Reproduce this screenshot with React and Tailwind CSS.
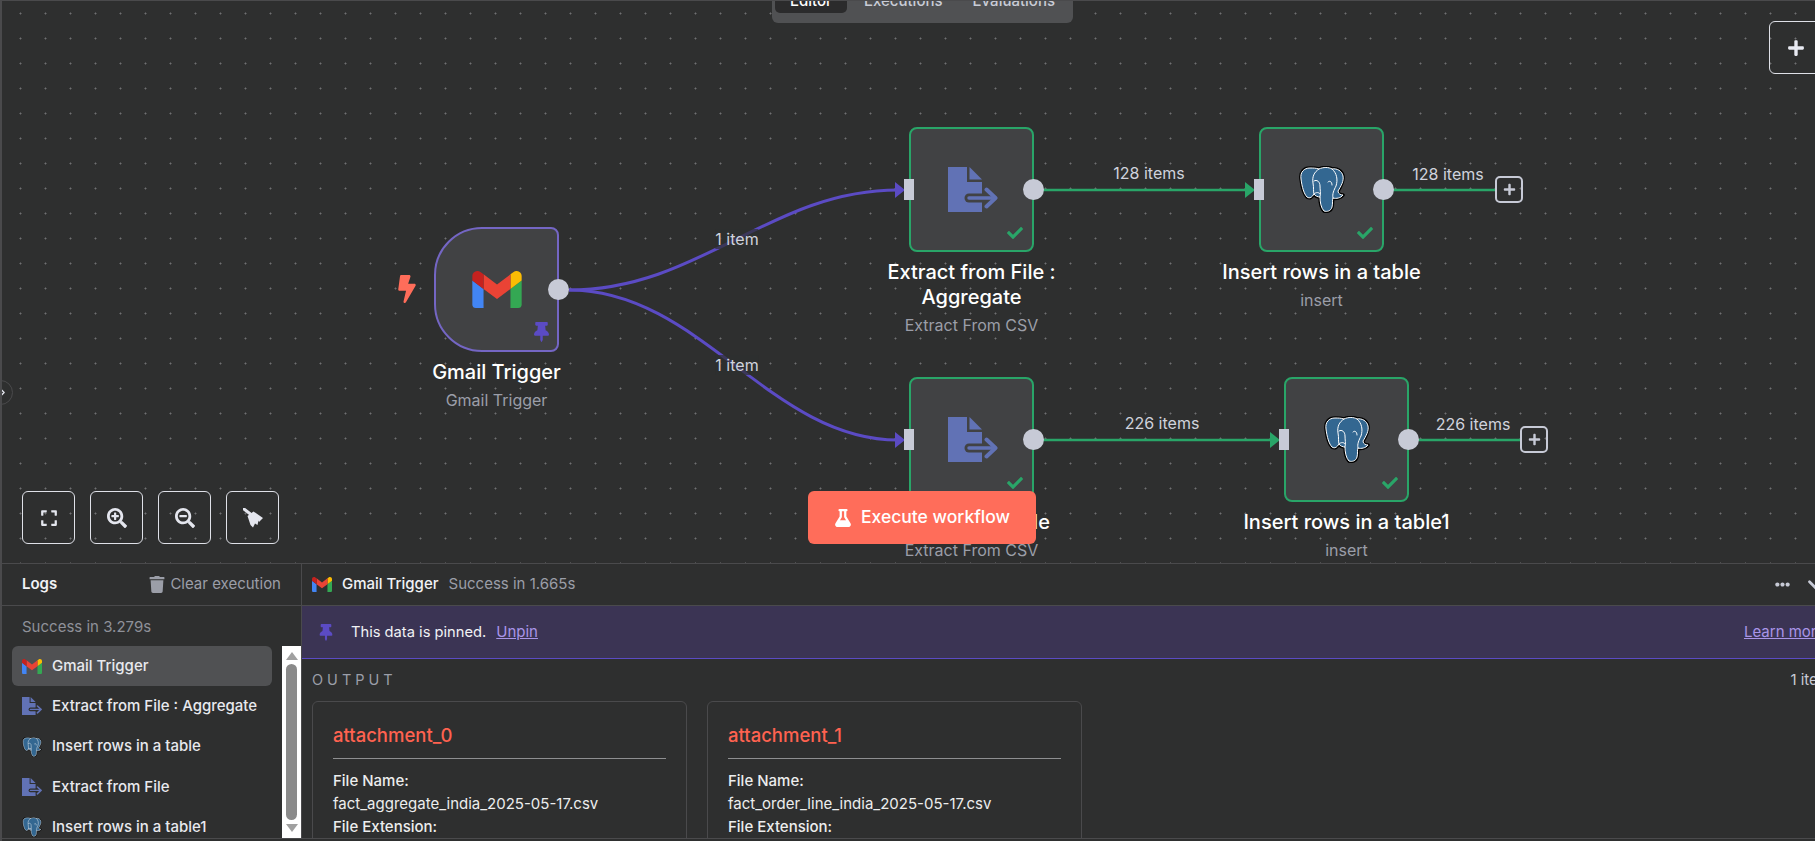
import React from 'react';
import { FaBolt, FaCheck, FaExpand, FaFlask, FaEllipsisH, FaPlus, FaSearchMinus, FaSearchPlus, FaThumbtack, FaTrash } from 'react-icons/fa';
import { ChevronDown, ChevronRight } from 'lucide-react';

const GmailIcon = ({ className }) => (
    <svg viewBox="52 42 88 66" className={className}>
        <path fill="#4285f4" d="M58 108h14V74L52 59v43c0 3.32 2.69 6 6 6" />
        <path fill="#34a853" d="M120 108h14c3.32 0 6-2.69 6-6V59l-20 15" />
        <path fill="#fbbc04" d="M120 48v26l20-15v-8c0-7.42-8.47-11.65-14.4-7.2" />
        <path fill="#ea4335" d="M72 74V48l24 18 24-18v26L96 92" />
        <path fill="#c5221f" d="M52 51v8l20 15V48l-5.6-4.2c-5.94-4.45-14.4-.22-14.4 7.2" />
    </svg>
);

const elephant = 'M11 2C5 2 1 6 2 13C3 21 5 28 8 31C11 33 13 31 15 28C16 30 19 31 21 31C21 36 22 42 25 45C28 46 32 45 33 41C34 37 33 34 34 32C37 33 42 32 44 29C42 29 39 28 39 25C42 20 45 15 44 10C43 5 38 2 33 3C30 1 24 1 20 3C17 2 14 2 11 2Z';

const PostgresIcon = ({ className }) => (
    <svg viewBox="0 0 46 47" className={className}>
        <path d={elephant} fill="#000" stroke="#000" strokeWidth="3.5" strokeLinejoin="round" />
        <path d={elephant} fill="#336791" stroke="#fff" strokeWidth="1" strokeLinejoin="round" />
        <g fill="none" stroke="#fff" strokeWidth="1" strokeLinecap="round">
            <path d="M20 3C15 6 13 11 14 17C15 22 14 25 15 28" />
            <path d="M33 3C38 7 39 14 37 20C35 24 33 28 34 32" />
            <path d="M15 15C18 13 21 16 21 20C21 24 22 27 21 31" />
            <path d="M29 16C31 14 33 16 33 19" />
            <path d="M15 28C17 26 20 26 21 28" />
        </g>
    </svg>
);

// document with an arrow leaving it, hole is the colour behind the icon
const ExtractIcon = ({ className, hole }) => (
    <svg viewBox="0 0 50 45" className={className} fill="none">
        <path d="M0 0H19V15H34V45H0Z" fill="#6172b5" />
        <path d="M21.5 0L34 12.5H21.5Z" fill="#6172b5" />
        <path d="M21 31H34" stroke={hole} strokeWidth="9" strokeLinecap="round" />
        <path d="M34 26.5H38V35.5H34Z" fill={hole} />
        <path d="M21 31H47" stroke="#6172b5" strokeWidth="3.5" strokeLinecap="round" />
        <path d="M38.5 22.5L47.5 31L38.5 39.5" stroke="#6172b5" strokeWidth="4" strokeLinecap="round" strokeLinejoin="round" />
    </svg>
);

const BroomIcon = ({ className }) => (
    <svg viewBox="0 0 20 20" className={className} fill="currentColor">
        <path d="M1 1L8 6.5" stroke="currentColor" strokeWidth="3" strokeLinecap="round" />
        <path d="M4.5 8L10.5 3.5L20 10L16 14L15.5 12.5L14.5 17L12 15.5L10 19.5L7.5 17Z" />
    </svg>
);

const NodeCard = ({ className, title, subtitle, icon, trigger }) => (
    <div className={`absolute flex w-[241px] flex-col items-center ${className}`}>
        <div className={`relative flex h-[125px] w-[125px] items-center justify-center border-2 bg-[#414244] ${trigger ? 'rounded-l-[48px] rounded-r-[8px] border-[#7466c4]' : 'rounded-[8px] border-[#29a568]'}`}>
            {icon}
            {!trigger && <span className="absolute -left-[7px] top-[50px] h-[21px] w-[10px] bg-[#c7cad6]"></span>}
            <span className="absolute -right-[12px] top-[50px] h-[21px] w-[21px] rounded-full bg-[#c7cad6]"></span>
            {trigger
                ? <FaThumbtack className="absolute bottom-[8px] right-[8px] h-[20px] w-[15px] text-[#5b4bc4]" />
                : <FaCheck className="absolute bottom-[9px] right-[7px] h-[16px] w-[20px] text-[#29a568]" />}
        </div>
        <div className="mt-[7.5px] w-[230px] text-center text-[20px] font-medium leading-[25px] text-white">{title}</div>
        <div className="mt-[5px] text-[16px] leading-[20px] text-[#9b9ea8]">{subtitle}</div>
    </div>
);

const EdgeLabel = ({ className, children }) => (
    <span className={`absolute -translate-x-1/2 -translate-y-1/2 text-[16px] leading-[20px] text-[#d0d3dd] ${className}`}>{children}</span>
);

const AddButton = ({ className }) => (
    <div className={`absolute flex h-[27px] w-[28px] items-center justify-center rounded-[5px] border-[2.5px] border-[#c7cad6] text-[#c7cad6] ${className}`}>
        <FaPlus className="h-[13px] w-[13px]" />
    </div>
);

const CanvasButton = ({ children }) => (
    <div className="flex h-[53px] w-[53px] items-center justify-center rounded-[6px] border border-[#dfe1e8] text-[#e4e6ee]">{children}</div>
);

const Edges = () => (
    <svg className="absolute left-0 top-0 h-[563px] w-[1815px]" viewBox="0 0 1815 563" fill="none">
        <path d="M569 289C700 289 770 189 898 189" stroke="#5b4bc4" strokeWidth="3" />
        <path d="M569 289C700 289 770 439 898 439" stroke="#5b4bc4" strokeWidth="3" />
        <polygon points="895,181 905,189 895,197" fill="#5b4bc4" />
        <polygon points="895,431 905,439 895,447" fill="#5b4bc4" />
        <path d="M1043 189H1250M1393 189H1496" stroke="#29a568" strokeWidth="2.5" />
        <path d="M1043 439H1275M1418 439H1521" stroke="#29a568" strokeWidth="2.5" />
        <polygon points="1245,181 1255,189 1245,197" fill="#29a568" />
        <polygon points="1270,431 1280,439 1270,447" fill="#29a568" />
    </svg>
);

const Canvas = () => (
    <div className="relative h-[562px] shrink-0 overflow-hidden bg-[#2e2f2f] bg-[radial-gradient(circle,#6f7072_0.9px,transparent_1.1px)] bg-[size:25px_25px] bg-[position:8px_0px]">
        <Edges />

        <EdgeLabel className="left-[737px] top-[238px] bg-[#2e2f2f]/70">1 item</EdgeLabel>
        <EdgeLabel className="left-[737px] top-[364px] bg-[#2e2f2f]/70">1 item</EdgeLabel>
        <EdgeLabel className="left-[1149px] top-[172px]">128 items</EdgeLabel>
        <EdgeLabel className="left-[1448px] top-[173px]">128 items</EdgeLabel>
        <EdgeLabel className="left-[1162px] top-[422px]">226 items</EdgeLabel>
        <EdgeLabel className="left-[1473px] top-[423px]">226 items</EdgeLabel>

        <FaBolt className="absolute left-[398px] top-[274px] h-[28px] w-[18px] text-[#ff6d5a]" />
        <NodeCard className="left-[376px] top-[226px]" title="Gmail Trigger" subtitle="Gmail Trigger" trigger icon={<GmailIcon className="h-[37px] w-[50px]" />} />
        <NodeCard className="left-[851px] top-[126px]" title="Extract from File : Aggregate" subtitle="Extract From CSV" icon={<ExtractIcon hole="#414244" className="ml-[2px] h-[45px] w-[50px]" />} />
        <NodeCard className="left-[1201px] top-[126px]" title="Insert rows in a table" subtitle="insert" icon={<PostgresIcon className="h-[47px] w-[46px]" />} />
        <NodeCard className="left-[851px] top-[376px]" title="Extract from File" subtitle="Extract From CSV" icon={<ExtractIcon hole="#414244" className="ml-[2px] h-[45px] w-[50px]" />} />
        <NodeCard className="left-[1226px] top-[376px]" title="Insert rows in a table1" subtitle="insert" icon={<PostgresIcon className="h-[47px] w-[46px]" />} />

        <AddButton className="left-[1495px] top-[175px]" />
        <AddButton className="left-[1520px] top-[425px]" />

        <div className="absolute left-[772px] top-[-16px] flex h-[38px] w-[301px] items-start gap-[4px] rounded-[6px] bg-[#505153] p-[3px] text-[15px] font-medium leading-[22px] text-[#c9ccd6]">
            <span className="rounded-[5px] bg-[#2b2b2c] px-[15px] pb-[1px] pt-[2px] text-white">Editor</span>
            <span className="px-[13px] pt-[2px]">Executions</span>
            <span className="px-[13px] pt-[2px]">Evaluations</span>
        </div>

        <div className="absolute left-[1769px] top-[20px] flex h-[53px] w-[53px] items-center justify-center rounded-[6px] border border-[#dfe1e8] text-[#e8eaf2]">
            <FaPlus className="h-[18px] w-[18px]" />
        </div>

        <div className="absolute -left-[12px] top-[379px] flex h-[25px] w-[25px] items-center justify-end rounded-full border border-[#4a4a4c] pr-[3px] text-[#e4e6ee]">
            <ChevronRight className="h-[13px] w-[13px]" strokeWidth={2.5} />
        </div>

        <div className="absolute left-[22px] top-[490px] flex gap-[15px]">
            <CanvasButton><FaExpand className="h-[18px] w-[18px]" /></CanvasButton>
            <CanvasButton><FaSearchPlus className="h-[20px] w-[20px]" /></CanvasButton>
            <CanvasButton><FaSearchMinus className="h-[20px] w-[20px]" /></CanvasButton>
            <CanvasButton><BroomIcon className="h-[20px] w-[20px]" /></CanvasButton>
        </div>

        <div className="absolute left-[808px] top-[490px] flex h-[53px] w-[228px] items-center justify-center gap-[9px] rounded-[6px] bg-[#ff6d5a] text-[17.5px] font-medium text-white">
            <FaFlask className="h-[18px] w-[18px]" />
            Execute workflow
        </div>
    </div>
);

const logRows = [
    { name: 'Gmail Trigger', icon: <GmailIcon className="h-[15px] w-[20px]" />, active: true },
    { name: 'Extract from File : Aggregate', icon: <ExtractIcon hole="#2e2f2f" className="h-[18px] w-[20px]" /> },
    { name: 'Insert rows in a table', icon: <PostgresIcon className="h-[20px] w-[20px]" /> },
    { name: 'Extract from File', icon: <ExtractIcon hole="#2e2f2f" className="h-[18px] w-[20px]" /> },
    { name: 'Insert rows in a table1', icon: <PostgresIcon className="h-[20px] w-[20px]" /> },
];

const LogsPanel = () => (
    <div className="flex w-[302px] shrink-0 flex-col border-r border-[#4a4a4c]">
        <div className="flex h-[42px] shrink-0 items-center justify-between border-b border-[#4a4a4c] pl-[22px] pr-[20px]">
            <span className="text-[15px] font-semibold text-[#f1f2f5]">Logs</span>
            <span className="flex items-center gap-[5px] text-[15px] text-[#9b9ea8]">
                <FaTrash className="h-[17px] w-[16px]" />
                Clear execution
            </span>
        </div>
        <div className="h-[40px] shrink-0 pl-[22px] pt-[11px] text-[15px] leading-[20px] text-[#8f9199]">Success in 3.279s</div>
        <div className="flex min-h-0 flex-1">
            <div className="w-[282px] shrink-0 overflow-hidden pl-[12px] pr-[10px]">
                {logRows.map((row) => (
                    <div key={row.name} className={`flex h-[40.25px] items-center gap-[10px] rounded-[6px] pl-[10px] text-[15px] font-medium text-[#e8e9ee] ${row.active ? 'bg-[#505153]' : ''}`}>
                        {row.icon}
                        <span>{row.name}</span>
                    </div>
                ))}
            </div>
            <div className="flex w-[19px] shrink-0 flex-col items-center justify-between bg-white py-[6px]">
                <span className="h-0 w-0 border-x-[6px] border-b-[8px] border-x-transparent border-b-[#a0a0a0]"></span>
                <span className="my-[4px] w-[11px] flex-1 rounded-full bg-[#8a8a8a]"></span>
                <span className="h-0 w-0 border-x-[6px] border-t-[8px] border-x-transparent border-t-[#a0a0a0]"></span>
            </div>
        </div>
    </div>
);

const OutputCard = ({ title, fileName }) => (
    <div className="h-[160px] w-[375px] shrink-0 rounded-[6px] border border-[#4a4a4c] px-[20px] pt-[20px]">
        <div className="border-b border-[#8e8f91] pb-[10px] text-[18.5px] font-medium leading-[26px] text-[#ff6250]">{title}</div>
        <div className="mt-[10px] text-[15px] leading-[23px] text-[#eceded]">
            <div className="font-medium">File Name:</div>
            <div>{fileName}</div>
            <div className="font-medium">File Extension:</div>
        </div>
    </div>
);

const DetailPanel = () => (
    <div className="flex min-w-0 flex-1 flex-col">
        <div className="flex h-[42px] shrink-0 items-center border-b border-[#4a4a4c] pl-[10px]">
            <GmailIcon className="h-[15px] w-[20px]" />
            <span className="ml-[10px] text-[15px] font-medium text-[#f1f2f5]">Gmail Trigger</span>
            <span className="ml-[10px] text-[15px] text-[#9b9ea8]">Success in 1.665s</span>
            <FaEllipsisH className="ml-auto h-[15px] w-[15px] text-[#c7cad6]" />
            <ChevronDown className="ml-[13px] mr-[-14px] h-[26px] w-[26px] shrink-0 text-[#c7cad6]" strokeWidth={2.5} />
        </div>
        <div className="flex h-[53px] shrink-0 items-center border-b border-[#5b4bc4] bg-[#3b3454] pl-[17px] text-[14.7px] text-[#f1f2f5]">
            <FaThumbtack className="h-[17px] w-[14px] text-[#5b4bc4]" />
            <span className="ml-[18px]">This data is pinned.</span>
            <span className="ml-[10px] text-[15px] text-[#a995e8] underline">Unpin</span>
            <span className="ml-auto mr-[-10px] whitespace-nowrap text-[15px] text-[#a995e8] underline">Learn more</span>
        </div>
        <div className="flex h-[42px] shrink-0 items-center justify-between pl-[10px]">
            <span className="text-[14.5px] tracking-[4px] text-[#9b9ea8]">OUTPUT</span>
            <span className="mr-[-16px] whitespace-nowrap text-[15px] text-[#c7cad6]">1 item</span>
        </div>
        <div className="flex min-h-0 flex-1 gap-[20px] overflow-hidden pl-[10px]">
            <OutputCard title="attachment_0" fileName="fact_aggregate_india_2025-05-17.csv" />
            <OutputCard title="attachment_1" fileName="fact_order_line_india_2025-05-17.csv" />
        </div>
    </div>
);

export default function App() {
    return (
        <div className="relative flex h-[841px] w-[1815px] flex-col overflow-hidden border-t border-[#4a4a4c] bg-[#2e2f2f] [font-family:Inter,sans-serif]">
            <Canvas />
            <div className="mb-[1px] flex h-[276px] shrink-0 border-y border-[#4a4a4c]">
                <LogsPanel />
                <DetailPanel />
            </div>
            <div className="absolute inset-y-0 left-0 w-[2px] bg-[#4a4a4c]"></div>
        </div>
    );
}
